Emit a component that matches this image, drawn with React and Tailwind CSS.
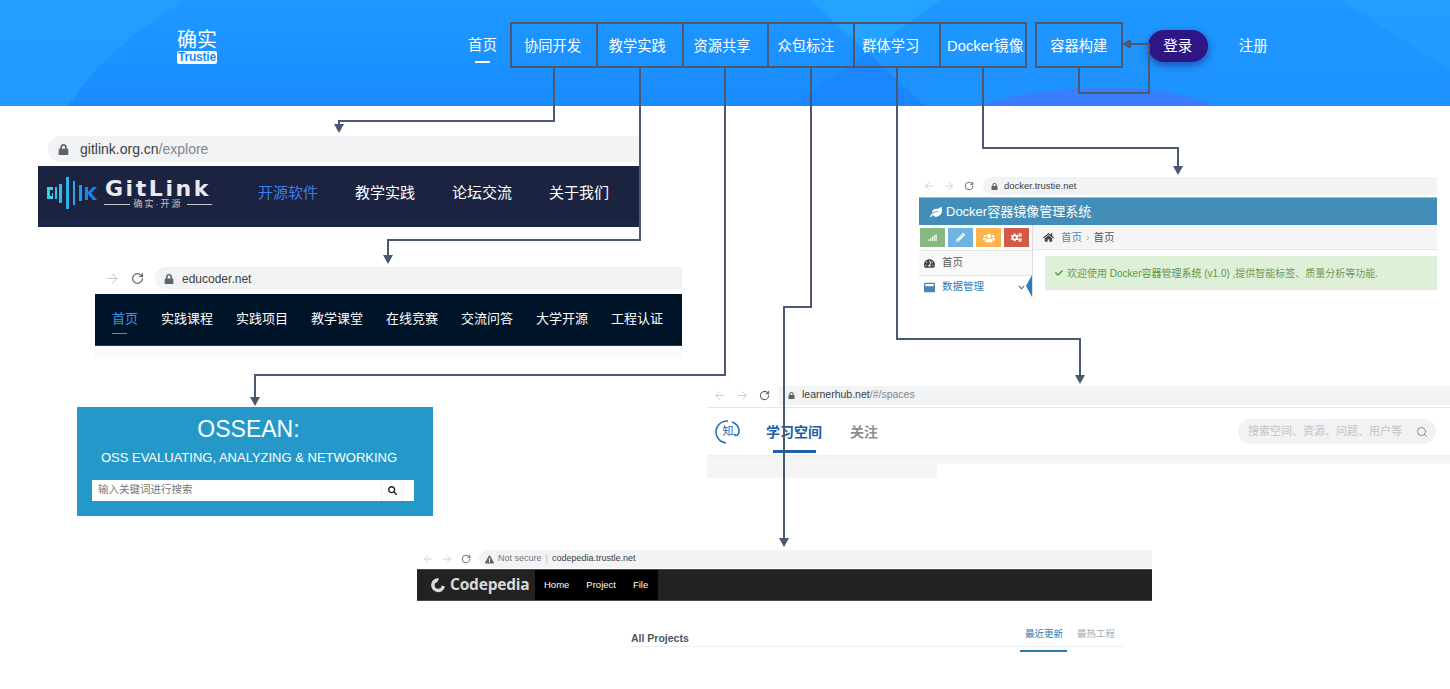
import { ArrowLeft, ArrowRight, RotateCw, Search } from 'lucide-react';
import { FaLeaf, FaHome, FaTachometerAlt, FaCheck, FaSignal, FaPencilAlt, FaUsers, FaCogs, FaChevronDown, FaWindowMaximize, FaSearch, FaLock, FaExclamationTriangle } from 'react-icons/fa';

// the labels drift left inside their boxes in the picture, so each keeps its own inset
const boxed = [
  { label: '协同开发', cls: 'pl-[12px] text-[14.25px]' },
  { label: '教学实践', cls: 'pl-[11px] text-[14.25px]' },
  { label: '资源共享', cls: 'pl-[10px] text-[14.25px]' },
  { label: '众包标注', cls: 'pl-[8px] text-[14.25px]' },
  { label: '群体学习', cls: 'pl-[7px] text-[14.25px]' },
  { label: 'Docker镜像', cls: 'pl-[6px] text-[14.8px]' },
];
const eduNav = ['实践课程', '实践项目', '教学课堂', '在线竞赛', '交流问答', '大学开源', '工程认证'];

// connector routes from the nav boxes down to each screenshot
const routes = [
  { points: '554,67 554,121 339,121 339,126', head: '334,124 344,124 339,133' },
  { points: '640,67 640,240 388,240 388,257', head: '383,255 393,255 388,264' },
  { points: '725,67 725,375 255,375 255,399', head: '250,397 260,397 255,406' },
  { points: '811,67 811,307 784,307 784,540', head: '779,538 789,538 784,547' },
  { points: '897,67 897,339 1080,339 1080,377', head: '1075,375 1085,375 1080,384' },
  { points: '983,67 983,148 1178,148 1178,168', head: '1173,166 1183,166 1178,175' },
  { points: '1079,67 1079,93 1149,93 1149,44 1128,44', head: '1131,39 1131,49 1122,44' },
];

function Connectors() {
  return (
    <svg className="absolute left-0 top-0 z-20 pointer-events-none" width="1450" height="689">
      {routes.map((r) => (
        <g key={r.points}>
          <polyline points={r.points} fill="none" stroke="#4a5872" strokeWidth="2" />
          <polygon points={r.head} fill="#4a5872" />
        </g>
      ))}
    </svg>
  );
}

function HeaderBackdrop() {
  return (
    <svg className="absolute left-0 top-0" width="1450" height="106">
      <path d="M0 0H185C135 30 95 65 68 106H0Z" fill="#27a2ff" opacity="0.65" />
      <path d="M810 0H940L868 53Z" fill="#27a6ff" opacity="0.8" />
      <path d="M868 53L925 106H790Z" fill="#1b86ff" />
      <path d="M940 0H1340L1450 70V106H925L868 53Z" fill="#2097ff" opacity="0.55" />
      <path d="M1340 0H1450V70Z" fill="#27a2ff" opacity="0.6" />
      <path d="M979 106C1020 92 1070 87 1110 87C1150 87 1190 95 1215 106Z" fill="#3a7dff" />
    </svg>
  );
}

function TopBar() {
  return (
    <header className="relative h-[106px] bg-gradient-to-b from-[#1e98ff] to-[#1a8cff] text-white">
      <HeaderBackdrop />
      <div className="relative flex items-start pt-[22px] pl-[177px]">
        <div className="flex flex-col items-center w-[40px] mt-[8px] leading-none">
          <span className="text-[20px] leading-[20px] whitespace-nowrap">确实</span>
          <span className="mt-[1px] bg-white text-[#1a8cff] text-[12px] font-bold rounded-[2px] w-full text-center leading-[13px] tracking-[-0.2px]">Trustie</span>
        </div>

        <div className="relative ml-[251px] w-[42px] h-[45px] flex items-center justify-start pt-[3px]">
          <span className="text-[14.5px]">首页</span>
          <span className="absolute left-[7px] top-[39px] w-[15px] h-[2px] bg-white" />
        </div>

        <nav className="flex pl-[2px]">
          {boxed.map((item) => (
            <div key={item.label} className={`w-[87.8px] h-[46px] -ml-[2px] pt-[3px] border-2 border-[#4a5872] flex items-center whitespace-nowrap ${item.cls}`}>
              {item.label}
            </div>
          ))}
        </nav>

        <div className="ml-[8px] w-[88px] h-[46px] pt-[3px] border-2 border-[#4a5872] flex items-center justify-center text-[14.25px]">容器构建</div>

        <button className="ml-[25px] mt-[8px] w-[60px] h-[32px] pt-[1px] rounded-full bg-[#2e1784] shadow-[0_3px_8px_rgba(30,20,110,0.55)] text-[14.5px] text-white">登录</button>
        <span className="ml-[31px] mt-[14px] text-[14.5px]">注册</span>
      </div>
    </header>
  );
}

function AddressBar({ size = 14, arrowClass = '', reloadClass = '', barClass, children, back = true }) {
  return (
    <div className="flex items-center">
      {back && <ArrowLeft size={size} className="text-[#c4c6c9]" strokeWidth={1.6} />}
      <ArrowRight size={size} className={`text-[#c4c6c9] ${arrowClass}`} strokeWidth={1.6} />
      <RotateCw size={size - 2} className={`text-[#5f6368] ${reloadClass}`} strokeWidth={2.2} />
      <div className={`flex items-center bg-[#f1f3f4] ${barClass}`}>{children}</div>
    </div>
  );
}

function GitLinkPanel() {
  const items = ['教学实践', '论坛交流', '关于我们'];
  return (
    <section className="absolute left-[38px] top-[136px] w-[602px]">
      <div className="ml-[10px] h-[26px] bg-[#f1f3f4] rounded-l-full flex items-center pl-[10px] text-[14px] text-[#3c4043]">
        <FaLock size={11} className="text-[#5f6368]" />
        <span className="ml-[11px]">gitlink.org.cn<span className="text-[#80868b]">/explore</span></span>
      </div>
      <div className="mt-[4px] h-[61px] bg-[#1b2340] border-b-[7px] border-[#1a2748] flex items-center text-white">
        <svg className="ml-[9px] -mt-[1px] shrink-0" width="51" height="34" viewBox="0 0 51 34">
          <path d="M0 11h6v3H3v6h2v-3h1v6H0Z" fill="#37d3e0" />
          <rect x="8" y="11" width="2" height="12" fill="#37c5e8" />
          <rect x="12" y="8" width="3" height="19" fill="#35b8ec" />
          <rect x="19" y="1" width="3" height="32" fill="#2fb3ee" />
          <rect x="26" y="5" width="2" height="24" fill="#2aa5ee" />
          <rect x="32" y="9" width="3" height="16" fill="#2196ee" />
          <path d="M38 11h3v5l5-5h4l-6 6 6 7h-4l-5-6v6h-3Z" fill="#1a86ec" />
        </svg>
        <div className="ml-[6px] w-[108px] flex flex-col items-center leading-none">
          <span className="text-[22px] font-bold tracking-[2.6px] text-[#e9e9ee] whitespace-nowrap [font-family:'DejaVu_Sans',sans-serif]">GitLink</span>
          <span className="w-full flex items-center gap-[4px] text-[9px] tracking-[2px] text-[#c2c5ce] whitespace-nowrap">
            <span className="flex-1 h-[1px] bg-[#c2c5ce]" />
            确实·开源
            <span className="flex-1 h-[1px] bg-[#c2c5ce]" />
          </span>
        </div>
        <span className="ml-[46px] text-[15px] text-[#3f7ce6]">开源软件</span>
        <div className="ml-[37px] flex gap-[37px] text-[15px]">
          {items.map((t) => <span key={t}>{t}</span>)}
        </div>
      </div>
    </section>
  );
}

function EducoderPanel() {
  return (
    <section className="absolute left-[95px] top-[267px] w-[587px]">
      <div className="flex items-center pl-[10px] h-[22px]">
        <AddressBar back={false} size={15} reloadClass="ml-[11px]" barClass="ml-[11px] w-[527px] h-[22px] rounded-l-full pl-[9px] pt-[1px] text-[12px] text-[#3c4043]">
          <FaLock size={10} className="text-[#5f6368]" />
          <span className="ml-[8px]">educoder.net</span>
        </AddressBar>
      </div>
      <div className="mt-[5px] h-[52px] bg-[#001429] border-b border-[#2c3a4c] flex items-center pb-[2px] pl-[17px] gap-[23px] text-[13px] text-white">
        <span className="relative text-[#3b95e8]">
          首页
          <span className="absolute left-0 top-[24px] w-[15px] h-[1px] bg-[#3b95e8]" />
        </span>
        {eduNav.map((t) => <span key={t}>{t}</span>)}
      </div>
      <div className="h-[13px] bg-[#fafafa]" />
    </section>
  );
}

function OsseanPanel() {
  return (
    <section className="absolute left-[77px] top-[407px] w-[356px] h-[109px] bg-[#2499c9] text-white flex flex-col items-center">
      <h2 className="mt-[7px] -ml-[13px] text-[23px] leading-[30px]">OSSEAN:</h2>
      <p className="mt-[6px] -ml-[12px] text-[13px] leading-[16px] whitespace-nowrap">OSS EVALUATING, ANALYZING &amp; NETWORKING</p>
      <div className="mt-[14px] w-[322px] h-[21px] bg-white flex items-center self-start ml-[15px] pl-[6px] pr-[11px]">
        <span className="text-[10.5px] text-[#777] flex-1 -mt-[2px]">输入关键词进行搜索</span>
        <span className="w-[22px] h-[20px] flex items-center justify-center border-x border-[#f1f1f1]">
          <FaSearch size={9} className="text-[#222]" />
        </span>
      </div>
    </section>
  );
}

function DockerPanel() {
  const tools = [
    { bg: 'bg-[#87b87f]', icon: <FaSignal size={9} /> },
    { bg: 'bg-[#6fb3e0]', icon: <FaPencilAlt size={9} /> },
    { bg: 'bg-[#ffb44b]', icon: <FaUsers size={12} /> },
    { bg: 'bg-[#d15b47]', icon: <FaCogs size={11} /> },
  ];
  return (
    <section className="absolute left-[919px] top-[177px] w-[518px]">
      <div className="flex items-center pl-[4px] h-[18px]">
        <AddressBar size={12} arrowClass="ml-[8px]" reloadClass="ml-[9px]" barClass="ml-[9px] w-[454px] h-[18px] rounded-l-full pl-[8px] text-[9.5px] text-[#3c4043]">
          <FaLock size={7} className="text-[#5f6368]" />
          <span className="ml-[6px]">docker.trustie.net</span>
        </AddressBar>
      </div>
      <div className="mt-[2px] h-[28px] bg-[#438eb9] border-t border-[#8fbcd6] flex items-center pl-[11px] text-[13px] text-white">
        <FaLeaf size={12} />
        <span className="ml-[4px]">Docker容器镜像管理系统</span>
      </div>
      <div className="flex h-[72px]">
        <aside className="relative w-[114px] shrink-0 border-r border-[#dcdcdc] text-[10.5px]">
          <div className="flex gap-[3px] pl-[1px] pt-[3px] pb-[3px] border-b border-[#e5e5e5]">
            {tools.map((t, i) => (
              <span key={i} className={`${t.bg} w-[25px] h-[19px] flex items-center justify-center text-white`}>{t.icon}</span>
            ))}
          </div>
          <div className="h-[25px] flex items-center pl-[5px] bg-[#f9f9f9] border-b border-[#e5e5e5] text-[#585858]">
            <FaTachometerAlt size={11} className="text-[#444]" />
            <span className="ml-[7px]">首页</span>
          </div>
          <div className="h-[22px] flex items-center pl-[5px] text-[#2b7dbc]">
            <FaWindowMaximize size={11} className="text-[#4f80b8]" />
            <span className="ml-[7px]">数据管理</span>
            <FaChevronDown size={7} className="ml-auto mr-[7px] text-[#666]" />
          </div>
          <span className="absolute right-0 top-[50px] w-0 h-0 border-y-[11px] border-y-transparent border-r-[6px] border-r-[#2b7dbc]" />
        </aside>
        <div className="flex-1 min-w-0">
          <div className="h-[25px] bg-[#f5f5f5] border-b border-[#e5e5e5] flex items-center pl-[10px] pt-[1px] text-[10.5px] text-[#555]">
            <FaHome size={11} className="text-[#444]" />
            <span className="ml-[7px] text-[#4c8fbd]">首页</span>
            <span className="mx-[4px] text-[#b2b6bf]">›</span>
            <span>首页</span>
          </div>
          <div className="ml-[12px] mt-[6px] h-[34px] bg-[#dff0d8] flex items-center pl-[10px] text-[10px] text-[#6f9a55] whitespace-nowrap">
            <FaCheck size={8} className="text-[#5a9a3c]" />
            <span className="ml-[4px]">欢迎使用 <span className="text-[#5f9440]">Docker容器管理系统 (v1.0)</span> ,提供智能标签、质量分析等功能.</span>
          </div>
        </div>
      </div>
    </section>
  );
}

function LearnerPanel() {
  return (
    <section className="absolute left-[707px] top-[385px] w-[743px]">
      <div className="flex items-center pl-[6px] h-[20px]">
        <AddressBar size={13} arrowClass="ml-[10px]" reloadClass="ml-[10px]" barClass="ml-[9px] w-[671px] h-[19px] pl-[9px] text-[10.5px] text-[#3c4043]">
          <FaLock size={7} className="text-[#5f6368]" />
          <span className="ml-[7px]">learnerhub.net<span className="text-[#80868b]">/#/spaces</span></span>
        </AddressBar>
      </div>
      <div className="mt-[2px] h-[50px] border-t border-[#e6e7e8] border-b-2 border-b-[#f0f0f0] flex items-center pl-[8px]">
        <div className="relative w-[26px] h-[26px] flex items-center justify-center text-[11px] text-[#1d5fa8]">
          <svg className="absolute inset-0" width="26" height="26" viewBox="0 0 26 26">
            <path d="M13 2A11 11 0 1 0 11 24M17 3a10 10 0 0 1 7 9c0 4-3 6-5 3" fill="none" stroke="#1d6fb5" strokeWidth="1.5" />
          </svg>
          知
        </div>
        <div className="relative ml-[25px] text-[14px] font-bold text-[#1d5fa8] h-full flex items-center pt-[2px]">
          学习空间
          <span className="absolute left-[7px] bottom-[2px] w-[43px] h-[3px] bg-[#1d5fa8]" />
        </div>
        <span className="ml-[28px] pt-[2px] text-[14px] font-bold text-[#8e8e8e]">关注</span>
        <div className="ml-auto mr-[14px] w-[198px] h-[25px] rounded-full bg-[#f1f2f3] flex items-center pl-[10px] text-[11px] text-[#c2c4c7]">
          <span className="flex-1 whitespace-nowrap">搜索空间、资源、问题、用户等</span>
          <Search size={12} className="mr-[8px] text-[#8a8d91]" />
        </div>
      </div>
      <div className="h-[21px] bg-[#f5f5f5] pt-[7px] pl-[230px]">
        <div className="h-full bg-white rounded-tl-[4px]" />
      </div>
    </section>
  );
}

function CodepediaPanel() {
  return (
    <section className="absolute left-[417px] top-[550px] w-[735px]">
      <div className="flex items-center pl-[5px] h-[18px]">
        <AddressBar size={12} arrowClass="ml-[7px]" reloadClass="ml-[8px]" barClass="ml-[8px] w-[673px] h-[18px] rounded-l-full pl-[6px] text-[9px] text-[#3c4043] whitespace-nowrap">
          <FaExclamationTriangle size={9} className="text-[#5f6368]" />
          <span className="ml-[4px] text-[#70757a]">Not secure</span>
          <span className="mx-[4px] text-[#bdc1c6]">|</span>
          <span>codepedia.trustle.net</span>
        </AddressBar>
      </div>
      <div className="mt-[1px] h-[32px] bg-[#222] border-y border-[#4a4a4a] flex text-white">
        <div className="w-[118px] flex items-center pl-[13px]">
          <svg width="16" height="16" viewBox="0 0 16 16">
            <path d="M9 1.2A7 7 0 1 0 15 9.5L11.5 8.5A3.4 3.4 0 1 1 7.5 5Z" fill="#d9d9d9" />
          </svg>
          <span className="ml-[4px] text-[15.5px] font-bold text-[#d9d9d9] [font-family:'Open_Sans',sans-serif] tracking-[-0.2px]">Codepedia</span>
        </div>
        <div className="w-[123px] bg-black flex items-center pl-[9px] gap-[17px] text-[9.5px]">
          <span>Home</span>
          <span>Project</span>
          <span>File</span>
        </div>
      </div>
      <div className="ml-[214px] mr-[28px] mt-[23px] relative border-b border-[#eeeeee] h-[23px] flex items-end justify-between">
        <span className="text-[10.5px] font-bold text-[#4b5560] leading-[18px] -mb-[1px]">All Projects</span>
        <div className="flex gap-[14px] pr-[9px] mb-[5px] text-[9.5px] leading-[14px]">
          <span className="text-[#2a7ab0]">最近更新</span>
          <span className="text-[#a9a9a9]">最热工程</span>
        </div>
        <span className="absolute right-[57px] -bottom-[6px] w-[47px] h-[2px] bg-[#2a7ab0]" />
      </div>
    </section>
  );
}

export default function App() {
  return (
    <div className="relative w-[1450px] h-[689px] overflow-hidden bg-white [font-family:'Liberation_Sans','Noto_Sans_CJK_SC',sans-serif]">
      <TopBar />
      <GitLinkPanel />
      <EducoderPanel />
      <OsseanPanel />
      <DockerPanel />
      <LearnerPanel />
      <CodepediaPanel />
      <Connectors />
    </div>
  );
}
